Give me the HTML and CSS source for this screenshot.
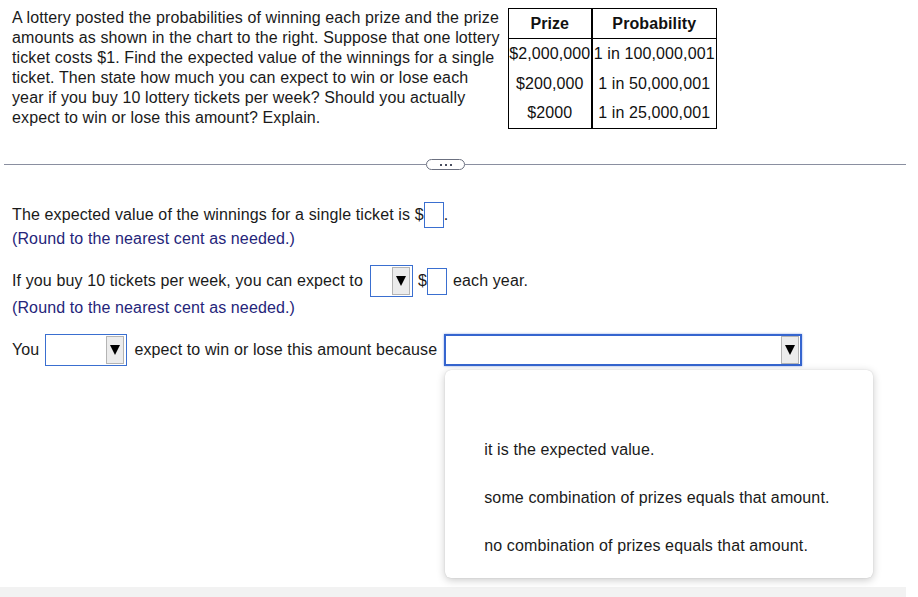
FILE: index.html
```html
<!DOCTYPE html>
<html>
<head>
<meta charset="utf-8">
<link rel="stylesheet" href="styles.css">
</head>
<body>
<div class="page">
  <div class="intro">
    <p class="prompt">A lottery posted the probabilities of winning each prize and the prize amounts as shown in the chart to the right. Suppose that one lottery ticket costs $1. Find the expected value of the winnings for a single ticket. Then state how much you can expect to win or lose each year if you buy 10 lottery tickets per week? Should you actually expect to win or lose this amount? Explain.</p>
    <table class="chart">
      <thead>
        <tr><th class="c1">Prize</th><th class="c2">Probability</th></tr>
      </thead>
      <tbody>
        <tr><td class="c1">$2,000,000</td><td class="c2">1 in 100,000,001</td></tr>
        <tr><td class="c1">$200,000</td><td class="c2">1 in 50,000,001</td></tr>
        <tr><td class="c1">$2000</td><td class="c2">1 in 25,000,001</td></tr>
      </tbody>
    </table>
  </div>

  <div class="divider">
    <span class="line left"></span>
    <span class="more"><i></i><i></i><i></i></span>
    <span class="line"></span>
  </div>

  <div class="answers">
    <div class="row row1">
      <span>The expected value of the winnings for a single ticket is $</span><span class="box box1"></span><span>.</span>
    </div>
    <div class="hint">(Round to the nearest cent as needed.)</div>

    <div class="row row2">
      <span>If you buy 10 tickets per week, you can expect to</span>
      <span class="select sel-small"><span class="arrow"><svg width="10" height="10" viewBox="0 0 10 10"><polygon points="0,0 10,0 5,10" fill="#000"/></svg></span></span>
      <span class="dollar">$</span><span class="box box2"></span>
      <span class="after">each year.</span>
    </div>
    <div class="hint">(Round to the nearest cent as needed.)</div>

    <div class="row row3">
      <span>You</span>
      <span class="select sel-mid"><span class="arrow"><svg width="10" height="10" viewBox="0 0 10 10"><polygon points="0,0 10,0 5,10" fill="#000"/></svg></span></span>
      <span>expect to win or lose this amount because</span>
      <span class="select-wrap">
        <span class="select sel-big"><span class="arrow"><svg width="10" height="10" viewBox="0 0 10 10"><polygon points="0,0 10,0 5,10" fill="#000"/></svg></span></span>
        <span class="menu">
          <span class="opt"></span>
          <span class="opt">it is the expected value.</span>
          <span class="opt">some combination of prizes equals that amount.</span>
          <span class="opt">no combination of prizes equals that amount.</span>
        </span>
      </span>
    </div>
  </div>
</div>
<div class="footer"></div>
</body>
</html>
```

FILE: styles.css
```css
* { box-sizing: border-box; }
html, body { margin: 0; padding: 0; background: #fff; }
body {
  font-family: "Liberation Sans", Arial, sans-serif;
  font-size: 16px;
  letter-spacing: 0.12px;
  color: #1a1a1a;
  width: 918px;
  height: 597px;
  overflow: hidden;
}
.page { height: 587px; }

.intro {
  display: flex;
  align-items: flex-start;
  padding: 8px 0 0 12px;
}
.prompt {
  margin: 0;
  width: 492px;
  line-height: 20px;
}
.chart {
  margin-left: 4px;
  border-collapse: collapse;
  border: 1px solid #000;
  color: #111;
  letter-spacing: 0.1px;
}
.chart th, .chart td {
  padding: 0;
  height: 30px;
  text-align: center;
  font-size: 16px;
  white-space: nowrap;
}
.chart th { font-weight: bold; border-bottom: 1px solid #000; height: 30px; padding-top: 1px; }
.chart .c1 { width: 83px; border-right: 2px solid #000; }
.chart .c2 { width: 125px; }

.divider {
  display: flex;
  align-items: center;
  margin: 30px 0 0 4px;
  width: 902px;
  height: 11px;
}
.divider .line { flex: 1; height: 1px; background: #8a8fa0; }
.divider .line.left { flex: 0 0 422px; }
.more {
  width: 39px;
  height: 11px;
  border: 1px solid #6b7080;
  border-radius: 6px;
  background: #fff;
  display: flex;
  align-items: center;
  justify-content: center;
  gap: 3px;
}
.more i { width: 2px; height: 2px; background: #4a4f60; display: block; }

.answers { padding-left: 12px; }
.row { display: flex; align-items: center; white-space: nowrap; }
.row1 { margin-top: 32px; height: 26px; }
.hint { color: #25257a; height: 20px; line-height: 20px; margin-top: 1px; }
.row2 { margin-top: 16px; height: 32px; }
.row3 { margin-top: 16px; height: 32px; }

.box {
  display: inline-block;
  border: 1px solid #3a6fd0;
  background: #fff;
}
.box1 { width: 20px; height: 26px; }
.box2 { width: 20px; height: 27px; }
.dollar { margin-left: 5px; }
.after { margin-left: 6px; }

.select {
  position: relative;
  display: inline-flex;
  justify-content: flex-end;
  align-items: center;
  height: 32px;
  border: 1px solid #3a6fd0;
  background: #fff;
  padding-right: 2px;
}
.sel-small { width: 43px; margin-left: 7px; }
.sel-mid { width: 82px; margin: 0 7px 0 6px; }
.arrow {
  width: 18px;
  height: 28px;
  background: #ececec;
  border: 1px solid #b4b4b4;
  display: flex;
  align-items: center;
  justify-content: center;
}
.arrow svg { display: block; }

.select-wrap { position: relative; margin-left: 7px; display: inline-block; height: 32px; }
.sel-big {
  width: 358px;
  border: 2px solid #3565cf;
  box-shadow: 0 0 2px rgba(53, 101, 207, 0.6);
  padding-right: 1px;
}
.menu {
  position: absolute;
  left: 1px;
  top: 36px;
  width: 428px;
  height: 208px;
  background: #fff;
  border-radius: 6px;
  box-shadow: 0 2px 8px rgba(0, 0, 0, 0.22), 0 0 1px rgba(0, 0, 0, 0.2);
  padding: 8px 0 0 39px;
  display: flex;
  flex-direction: column;
  z-index: 2;
}
.opt { height: 48px; line-height: 48px; display: block; color: #1a1a1a; }

.footer { height: 10px; width: 906px; background: #f2f2f2; }
```
